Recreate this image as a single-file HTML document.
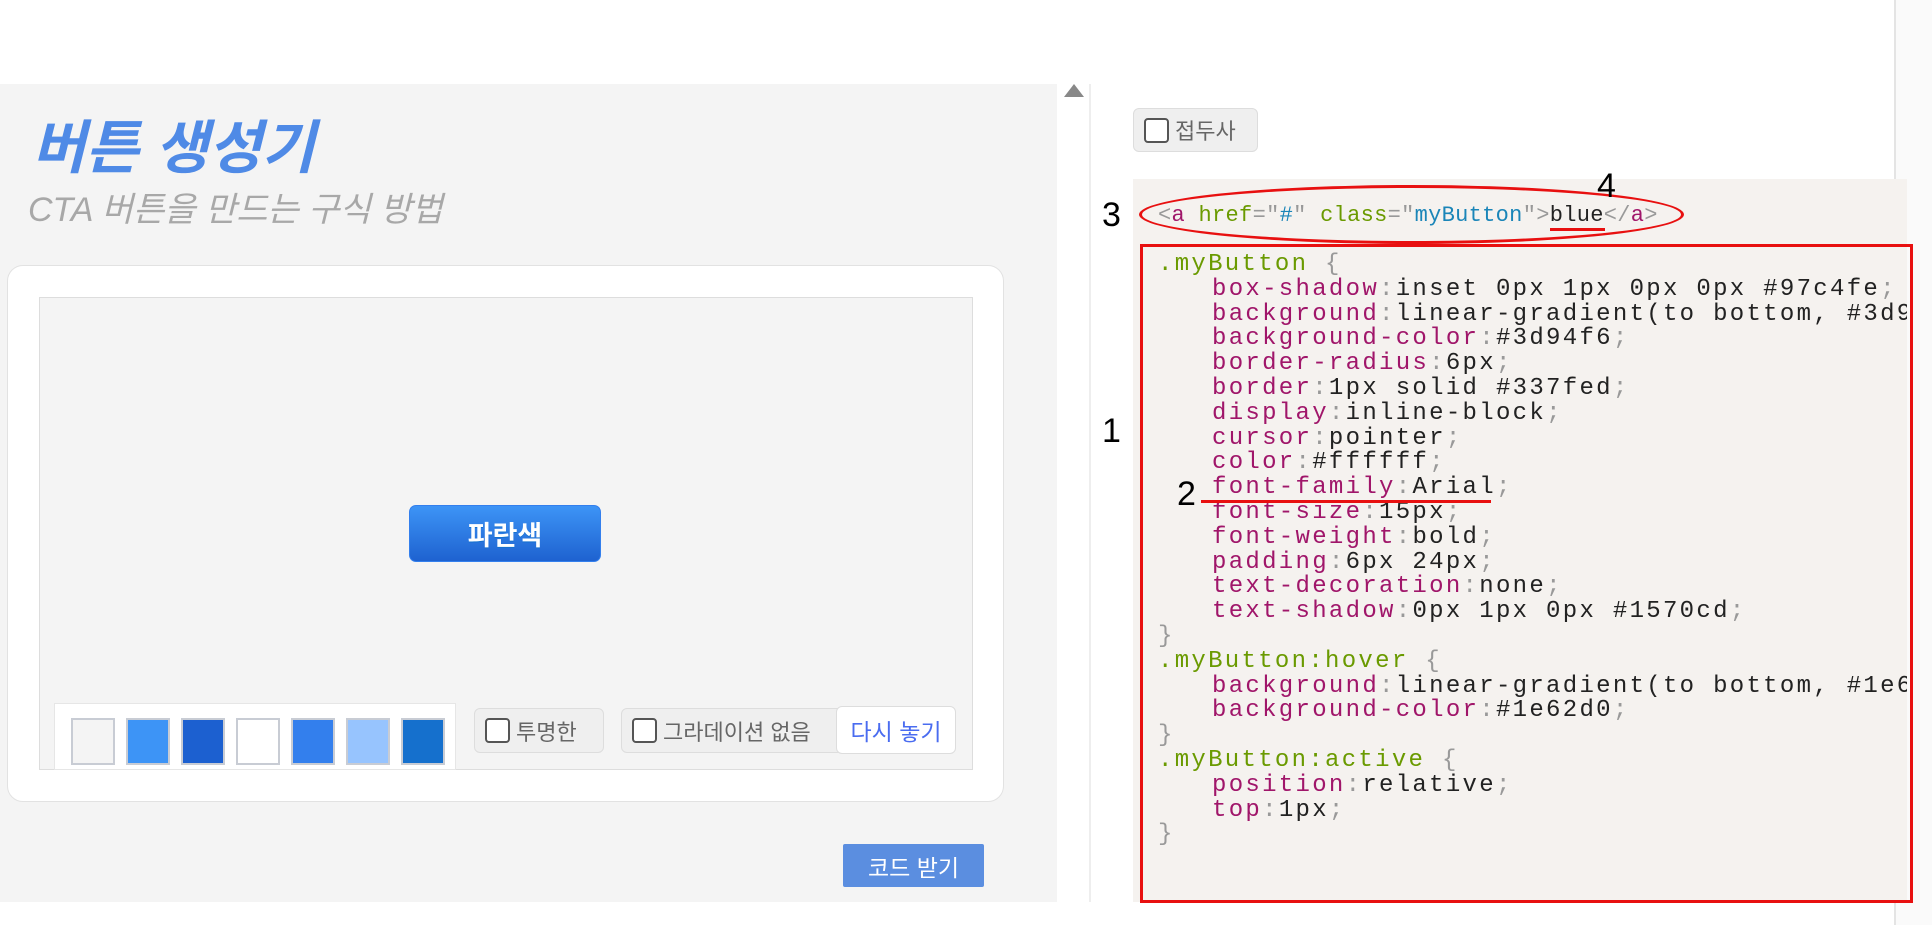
<!DOCTYPE html>
<html><head><meta charset="utf-8"><style>
body{margin:0;width:1932px;height:925px;position:relative;background:#fff;font-family:"Liberation Sans","Noto Sans CJK KR",sans-serif;overflow:hidden}
.a{position:absolute}
.sw{position:absolute;top:718px;width:40px;height:43px;border:2px solid #c8ccd4;box-sizing:content-box}
.btn{position:absolute;background:#efefef;border:1px solid #ddd;border-radius:6px;color:#666;font-size:22px;display:flex;align-items:center;box-sizing:border-box}
.cb{display:inline-block;width:21px;height:21px;border:2px solid #555;border-radius:4px;margin:0 6px 0 10px;background:#fff}
.clip{position:absolute;left:1133px;top:179px;width:774px;height:723px;background:#f5f2ef;overflow:hidden}
.code{position:absolute;left:25px;top:74px;font-family:"Liberation Mono",monospace;font-size:24px;letter-spacing:2.3px;line-height:24.8px;white-space:pre;color:#222}
.code div.i{padding-left:54px}
.p{color:#a0166a}.s{color:#6a9a00}.g{color:#999}.b{color:#1a85b8}
.n{position:absolute;font-size:34px;color:#000}
</style></head><body>
<div class="a" style="left:0;top:84px;width:1057px;height:818px;background:#f4f4f4"></div>
<div class="a" style="left:1089px;top:84px;width:2px;height:818px;background:#eee"></div>
<div class="a" style="left:1894px;top:0;width:38px;height:925px;background:#fafafa;border-left:2px solid #e4e4e4"></div>
<div class="a" style="left:1064px;top:84px;width:0;height:0;border-left:10px solid transparent;border-right:10px solid transparent;border-bottom:13px solid #888"></div>
<div class="a" style="left:32px;top:101px;font-size:58px;font-weight:bold;font-style:italic;color:#4f8ae6">버튼 생성기</div>
<div class="a" style="left:28px;top:182px;font-size:34px;font-style:italic;color:#a8a8a8">CTA 버튼을 만드는 구식 방법</div>
<div class="a" style="left:7px;top:265px;width:997px;height:537px;background:#fff;border:1px solid #e2e2e2;border-radius:16px;box-sizing:border-box"></div>
<div class="a" style="left:39px;top:297px;width:934px;height:473px;background:#f4f4f4;border:1px solid #ddd;box-sizing:border-box"></div>
<div class="a" style="left:409px;top:505px;width:192px;height:57px;border-radius:7px;border:1px solid #337fed;background:linear-gradient(#3d94f6,#1e62d0);color:#fff;font-weight:bold;font-size:27px;display:flex;align-items:center;justify-content:center;box-sizing:border-box;text-shadow:0 1px 0 #1570cd">파란색</div>
<div class="a" style="left:54px;top:703px;width:402px;height:67px;background:#fff;border:1px solid #e6e6e6;box-sizing:border-box"></div>
<div class="sw" style="left:71px;background:#f4f4f4"></div>
<div class="sw" style="left:126px;background:#3d94f6"></div>
<div class="sw" style="left:181px;background:#1c60d0"></div>
<div class="sw" style="left:236px;background:#fff"></div>
<div class="sw" style="left:291px;background:#337fed"></div>
<div class="sw" style="left:346px;background:#97c4fe"></div>
<div class="sw" style="left:401px;background:#1570cd"></div>
<div class="btn" style="left:474px;top:708px;width:130px;height:45px"><span class="cb"></span>투명한</div>
<div class="btn" style="left:621px;top:708px;width:222px;height:45px"><span class="cb"></span>그라데이션 없음</div>
<div class="a" style="left:836px;top:706px;width:120px;height:48px;background:#fff;border:1px solid #ddd;border-radius:6px;color:#4a6cf0;font-size:23px;display:flex;align-items:center;justify-content:center;box-sizing:border-box">다시 놓기</div>
<div class="a" style="left:843px;top:844px;width:141px;height:43px;background:#5b8ee0;color:#fff;font-size:23px;display:flex;align-items:center;justify-content:center;border-radius:2px">코드 받기</div>
<div class="btn" style="left:1133px;top:108px;width:125px;height:44px"><span class="cb"></span>접두사</div>
<div class="clip">
<div class="code" style="top:25px;font-size:22px;letter-spacing:0.3px"><span class="g">&lt;</span><span class="p">a</span> <span class="s">href</span><span class="g">="</span><span class="b">#</span><span class="g">"</span> <span class="s">class</span><span class="g">="</span><span class="b">myButton</span><span class="g">"&gt;</span>blue<span class="g">&lt;/</span><span class="p">a</span><span class="g">&gt;</span></div>
<div class="code"><div><span class="s">.myButton</span> <span class="g">{</span></div><div class="i"><span class="p">box-shadow</span><span class="g">:</span>inset 0px 1px 0px 0px #97c4fe<span class="g">;</span></div><div class="i"><span class="p">background</span><span class="g">:</span>linear-gradient(to bottom, #3d94f6 5%, #</div><div class="i"><span class="p">background-color</span><span class="g">:</span>#3d94f6<span class="g">;</span></div><div class="i"><span class="p">border-radius</span><span class="g">:</span>6px<span class="g">;</span></div><div class="i"><span class="p">border</span><span class="g">:</span>1px solid #337fed<span class="g">;</span></div><div class="i"><span class="p">display</span><span class="g">:</span>inline-block<span class="g">;</span></div><div class="i"><span class="p">cursor</span><span class="g">:</span>pointer<span class="g">;</span></div><div class="i"><span class="p">color</span><span class="g">:</span>#ffffff<span class="g">;</span></div><div class="i"><span class="p">font-family</span><span class="g">:</span>Arial<span class="g">;</span></div><div class="i"><span class="p">font-size</span><span class="g">:</span>15px<span class="g">;</span></div><div class="i"><span class="p">font-weight</span><span class="g">:</span>bold<span class="g">;</span></div><div class="i"><span class="p">padding</span><span class="g">:</span>6px 24px<span class="g">;</span></div><div class="i"><span class="p">text-decoration</span><span class="g">:</span>none<span class="g">;</span></div><div class="i"><span class="p">text-shadow</span><span class="g">:</span>0px 1px 0px #1570cd<span class="g">;</span></div><div><span class="g">}</span></div><div><span class="s">.myButton:hover</span> <span class="g">{</span></div><div class="i"><span class="p">background</span><span class="g">:</span>linear-gradient(to bottom, #1e62d0 5%, #</div><div class="i"><span class="p">background-color</span><span class="g">:</span>#1e62d0<span class="g">;</span></div><div><span class="g">}</span></div><div><span class="s">.myButton:active</span> <span class="g">{</span></div><div class="i"><span class="p">position</span><span class="g">:</span>relative<span class="g">;</span></div><div class="i"><span class="p">top</span><span class="g">:</span>1px<span class="g">;</span></div><div><span class="g">}</span></div></div>
</div>
<div class="a" style="left:1140px;top:244px;width:773px;height:659px;border:3px solid #e81010;box-sizing:border-box"></div>
<div class="a" style="left:1139px;top:185px;width:545px;height:59px;border:3px solid #e81010;border-radius:50%;box-sizing:border-box"></div>
<div class="a" style="left:1201px;top:500px;width:290px;height:3px;background:#e81010"></div>
<div class="a" style="left:1550px;top:228px;width:55px;height:3px;background:#e81010"></div>
<div class="n" style="left:1102px;top:196px">3</div>
<div class="n" style="left:1102px;top:412px">1</div>
<div class="n" style="left:1177px;top:475px">2</div>
<div class="n" style="left:1597px;top:167px">4</div>
</body></html>
